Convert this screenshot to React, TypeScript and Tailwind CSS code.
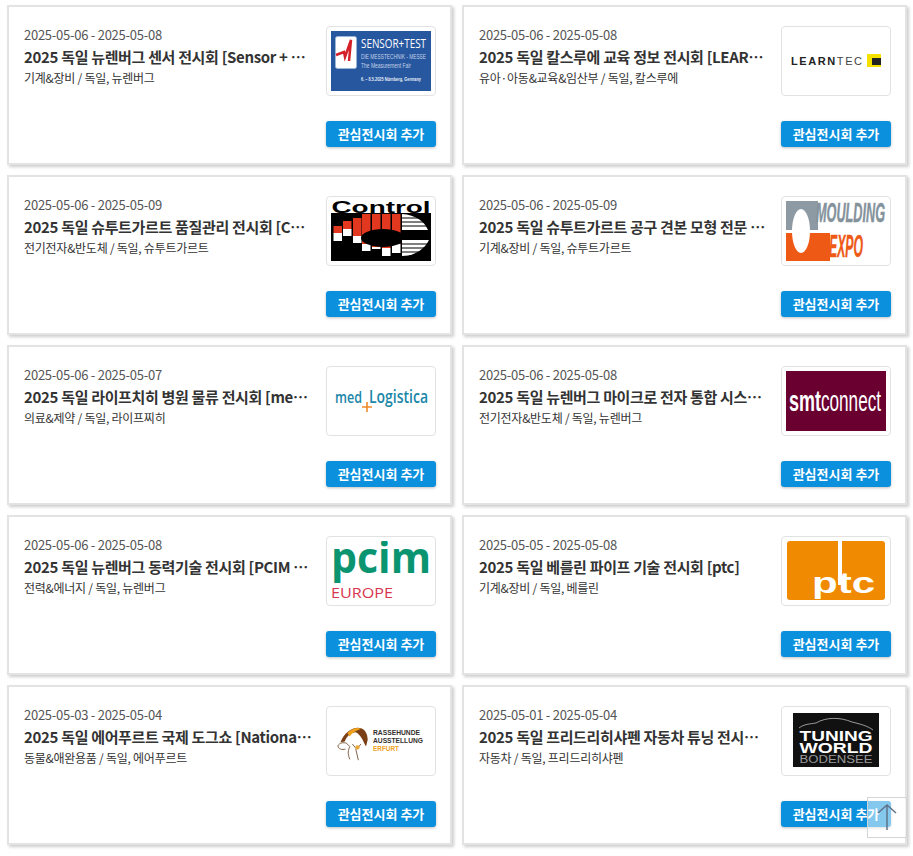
import React from 'react'

const FONT = "'Noto Sans CJK KR', 'Noto Sans', sans-serif"

const SensorLogo = () => (
    <svg viewBox="0 0 100 60" className="w-full h-full">
        <rect width="100" height="60" fill="#27579f" />
        <rect x="4.5" y="5.5" width="21" height="32" rx="2" fill="#fff" stroke="#9db6d8" />
        <path d="M5 24 L13 21 L14 26 L20 9 L18 30" fill="none" stroke="#d5202a" strokeWidth="2.5" />
        <text x="30" y="17" fontSize="13" fontWeight="500" fill="#fff" textLength="65" lengthAdjust="spacingAndGlyphs" fontFamily="Open Sans">SENSOR+TEST</text>
        <text x="30" y="28" fontSize="7" fill="#c4d3ea" textLength="65" lengthAdjust="spacingAndGlyphs" fontFamily="Liberation Sans">DIE MESSTECHNIK - MESSE</text>
        <text x="30" y="37" fontSize="7" fill="#c4d3ea" textLength="50" lengthAdjust="spacingAndGlyphs" fontFamily="Liberation Sans">The Measurement Fair</text>
        <text x="30" y="50" fontSize="5" fontWeight="700" fill="#e6edf7" textLength="60" lengthAdjust="spacingAndGlyphs" fontFamily="Liberation Sans">6. – 8.5.2025 Nürnberg, Germany</text>
    </svg>
)

const LearntecLogo = () => (
    <svg viewBox="0 0 100 60" className="w-full h-full">
        <rect width="100" height="60" fill="#fff" />
        <text x="5" y="34" fontSize="11" fontWeight="700" fill="#222" textLength="71" fontFamily="Liberation Sans">LEARN<tspan fontWeight="400" fill="#444">TEC</tspan></text>
        <rect x="81" y="23" width="14" height="13" fill="#f4e100" />
        <rect x="86" y="27" width="9" height="7" fill="#222" />
    </svg>
)

const controlCols = [
    { x: 2.5, redY: 25, whiteY: 32, whiteH: 8 },
    { x: 12, redY: 20, whiteY: 28, whiteH: 7 },
    { x: 22, redY: 17, whiteY: 35, whiteH: 7 },
    { x: 31, redY: 13, whiteY: 43, whiteH: 7 },
    { x: 41, redY: 13, whiteY: 46, whiteH: 2 },
    { x: 51, redY: 13, whiteY: 47, whiteH: 8 },
    { x: 61, redY: 13, whiteY: 43, whiteH: 9 },
]

const ControlLogo = () => (
    <svg viewBox="0 0 100 60" className="w-full h-full">
        <rect width="100" height="60" fill="#000" />
        <rect width="100" height="12" fill="#fff" />
        <text x="50" y="12" textAnchor="middle" fontSize="16" fontWeight="700" fill="#000" textLength="99" lengthAdjust="spacingAndGlyphs" fontFamily="Liberation Sans">Control</text>
        {controlCols.map((col) => (
            <g key={col.x}>
                <rect x={col.x} y={col.redY} width="8.5" height={col.whiteY - col.redY} fill="#e2381f" />
                <rect x={col.x} y={col.whiteY} width="8.5" height={col.whiteH} fill="#fff" />
            </g>
        ))}
        <ellipse cx="52" cy="37" rx="22" ry="9" fill="#000" />
        <path d="M71 13 C85 14 93 20 97 29 L71 29Z M71 39 H98 C94 47 85 55 71 55Z" fill="#fff" />
        <path d="M71 17 H97 M71 21 H97 M71 25 H97 M71 43 H97 M71 47 H97 M71 51 H97" stroke="#000" strokeWidth="1.2" />
    </svg>
)

const MouldingLogo = () => (
    <svg viewBox="0 0 100 60" className="w-full h-full">
        <rect width="100" height="60" fill="#fff" />
        <rect width="32" height="29" fill="#8d9aa3" />
        <rect y="32" width="44" height="28" fill="#ee5a15" />
        <ellipse cx="15" cy="30" rx="9" ry="22" fill="#fff" />
        <text x="30" y="21" fontSize="28" fontWeight="700" fontStyle="italic" fill="#84929b" stroke="#84929b" strokeWidth="0.5" textLength="69" lengthAdjust="spacingAndGlyphs" fontFamily="Liberation Sans">MOULDING</text>
        <text x="43" y="56" fontSize="32" fontWeight="700" fontStyle="italic" fill="#ee5a15" stroke="#ee5a15" strokeWidth="0.4" textLength="34" lengthAdjust="spacingAndGlyphs" fontFamily="Liberation Sans">EXPO</text>
    </svg>
)

const MedLogo = () => (
    <svg viewBox="0 0 100 60" className="w-full h-full">
        <rect width="100" height="60" fill="#fff" />
        <text x="4" y="32" fontSize="17" fontWeight="600" fill="#1a86a8" textLength="27" lengthAdjust="spacingAndGlyphs" fontFamily="Open Sans">med</text>
        <text x="38" y="32" fontSize="18" fontWeight="600" fill="#1a86a8" textLength="59" lengthAdjust="spacingAndGlyphs" fontFamily="Open Sans">Logistica</text>
        <path d="M36 31 V41 M31 36 H41" stroke="#ef8a2a" strokeWidth="1.6" />
    </svg>
)

const SmtLogo = () => (
    <svg viewBox="0 0 100 60" className="w-full h-full">
        <rect width="100" height="60" fill="#6a0030" />
        <text x="3" y="40" fontSize="30" fill="#fff" textLength="32" lengthAdjust="spacingAndGlyphs" fontWeight="700" fontFamily="Liberation Sans">smt</text>
        <text x="35" y="40" fontSize="30" fill="#fff" textLength="60" lengthAdjust="spacingAndGlyphs" fontFamily="Liberation Sans">connect</text>
    </svg>
)

const PcimLogo = () => (
    <svg viewBox="0 0 100 60" className="w-full h-full">
        <rect width="100" height="60" fill="#fff" />
        <text x="0" y="32" fontSize="43" fontWeight="700" fill="#0a9470" textLength="100" lengthAdjust="spacingAndGlyphs" fontFamily="Open Sans">pcim</text>
        <text x="0" y="57" fontSize="15" fill="#d8344f" textLength="62" lengthAdjust="spacingAndGlyphs" fontFamily="Open Sans">EUROPE</text>
    </svg>
)

const PtcLogo = () => (
    <svg viewBox="0 0 100 60" className="w-full h-full">
        <rect width="100" height="60" fill="#fff" />
        <rect x="1" y="0" width="98" height="59" rx="3" fill="#f08a00" />
        <rect x="52" y="0" width="4" height="44" fill="#fff" />
        <text x="26" y="52" fontSize="30" fontWeight="700" fill="#fff" textLength="63" lengthAdjust="spacingAndGlyphs" fontFamily="Liberation Sans">ptc</text>
    </svg>
)

const RasseLogo = () => (
    <svg viewBox="0 0 100 60" className="w-full h-full">
        <rect width="100" height="60" fill="#fff" />
        <g transform="translate(1 5) scale(0.85)">
            <path d="M10 31 C14 20 24 13 32 14 C38 14 42 20 42 28 L40 36 C36 28 34 22 28 19 C22 19 17 24 15 30Z" fill="#7a3f16" />
            <path d="M18 20 C24 14 30 13 34 15 C30 17 24 19 21 24Z" fill="#eea21d" />
            <path d="M7 35 C9 31 14 31 17 32 L21 36 C19 40 18 44 21 51 M7 35 C7 39 12 40 16 39 M24 33 L29 39 L34 33 M28 39 L31 52" fill="none" stroke="#6d4a2a" strokeWidth="1" />
            <circle cx="30" cy="37" r="2.5" fill="#e8a838" />
        </g>
        <text x="42" y="24" fontSize="7" fontWeight="700" fill="#33302c" textLength="47" lengthAdjust="spacingAndGlyphs" fontFamily="Liberation Sans">RASSEHUNDE</text>
        <text x="42" y="32" fontSize="7" fontWeight="700" fill="#33302c" textLength="50" lengthAdjust="spacingAndGlyphs" fontFamily="Liberation Sans">AUSSTELLUNG</text>
        <text x="42" y="40" fontSize="7" fontWeight="700" fill="#eea21d" textLength="26" lengthAdjust="spacingAndGlyphs" fontFamily="Liberation Sans">ERFURT</text>
    </svg>
)

const TuningLogo = () => (
    <svg viewBox="0 0 100 60" className="w-full h-full">
        <rect width="100" height="60" fill="#fff" />
        <rect x="7" y="2" width="86" height="54" fill="#111" />
        <path d="M13 17 C18 13 24 13 30 12 C40 6 54 6 66 11 C74 13 82 15 87 19" fill="none" stroke="#bbb" strokeWidth="0.8" />
        <text x="50" y="30" textAnchor="middle" fontSize="14" fontWeight="700" fill="#fff" textLength="73" lengthAdjust="spacingAndGlyphs" fontFamily="Liberation Sans">TUNING</text>
        <text x="50" y="42" textAnchor="middle" fontSize="14" fontWeight="700" fill="#fff" textLength="73" lengthAdjust="spacingAndGlyphs" fontFamily="Liberation Sans">WORLD</text>
        <text x="50" y="52" textAnchor="middle" fontSize="10" fill="#999" textLength="73" lengthAdjust="spacingAndGlyphs" fontFamily="Liberation Sans">BODENSEE</text>
    </svg>
)

const fairs = [
    { date: '2025-05-06 - 2025-05-08', title: '2025 독일 뉴렌버그 센서 전시회 [Sensor + Test]', cat: '기계&장비 / 독일, 뉴렌버그', logo: <SensorLogo /> },
    { date: '2025-05-06 - 2025-05-08', title: '2025 독일 칼스루에 교육 정보 전시회 [LEARNTEC]', cat: '유아·아동&교육&임산부 / 독일, 칼스루에', logo: <LearntecLogo /> },
    { date: '2025-05-06 - 2025-05-09', title: '2025 독일 슈투트가르트 품질관리 전시회 [Control]', cat: '전기전자&반도체 / 독일, 슈투트가르트', logo: <ControlLogo /> },
    { date: '2025-05-06 - 2025-05-09', title: '2025 독일 슈투트가르트 공구 견본 모형 전문 전시회', cat: '기계&장비 / 독일, 슈투트가르트', logo: <MouldingLogo /> },
    { date: '2025-05-06 - 2025-05-07', title: '2025 독일 라이프치히 병원 물류 전시회 [med+Logistica]', cat: '의료&제약 / 독일, 라이프찌히', logo: <MedLogo /> },
    { date: '2025-05-06 - 2025-05-08', title: '2025 독일 뉴렌버그 마이크로 전자 통합 시스템 전시회', cat: '전기전자&반도체 / 독일, 뉴렌버그', logo: <SmtLogo /> },
    { date: '2025-05-06 - 2025-05-08', title: '2025 독일 뉴렌버그 동력기술 전시회 [PCIM Europe]', cat: '전력&에너지 / 독일, 뉴렌버그', logo: <PcimLogo /> },
    { date: '2025-05-05 - 2025-05-08', title: '2025 독일 베를린 파이프 기술 전시회 [ptc]', cat: '기계&장비 / 독일, 베를린', logo: <PtcLogo /> },
    { date: '2025-05-03 - 2025-05-04', title: '2025 독일 에어푸르트 국제 도그쇼 [National Dog Show]', cat: '동물&애완용품 / 독일, 에어푸르트', logo: <RasseLogo /> },
    { date: '2025-05-01 - 2025-05-04', title: '2025 독일 프리드리히샤펜 자동차 튜닝 전시회 [Tuning World]', cat: '자동차 / 독일, 프리드리히샤펜', logo: <TuningLogo /> },
]

const App = () => {
    return (
        <div className="bg-white h-[856px] pl-[7px] pt-[5px] overflow-hidden" style={{ fontFamily: FONT }}>
            <div className="grid grid-cols-[445px_445px] gap-x-[10px] gap-y-[10px]">
                {fairs.map((fair) => (
                    <div
                        key={fair.title}
                        className="h-[160px] bg-white border-2 border-[#e3e3e3] shadow-[2px_2px_3px_rgba(0,0,0,0.2)] pl-[15px] pr-[14px] pt-[19px] flex flex-col"
                    >
                        <div className="flex justify-between">
                            <div className="w-[289px]">
                                <p className="text-[13px] leading-[18px] tracking-[-0.26px] text-[#555555]">{fair.date}</p>
                                <p className="mt-[2px] text-[15px] leading-[22px] tracking-[-0.33px] font-semibold text-[#333333] truncate">{fair.title}</p>
                                <p className="mt-[1px] text-[12px] leading-[18px] tracking-[-0.25px] text-[#333333]">{fair.cat}</p>
                            </div>
                            <div className="w-[110px] h-[70px] border border-[#e2e2e2] rounded-[4px] p-[4px] bg-white">
                                {fair.logo}
                            </div>
                        </div>
                        <div className="flex justify-end mt-[25px]">
                            <button className="w-[110px] h-[26px] rounded-[3px] bg-[#0a90dd] text-white text-[13px] font-bold shadow-[0_1px_3px_rgba(0,0,0,0.25)]">
                                관심전시회 추가
                            </button>
                        </div>
                    </div>
                ))}
            </div>

            {/* scroll to top */}
            <button className="fixed left-[867px] top-[797px] w-[40px] h-[41px] border border-[#d5d5d5] bg-white/50 flex items-center justify-center">
                <svg viewBox="0 0 38 39" className="w-[38px] h-[39px]">
                    <path d="M19 32 V7 M10 15 L19 7 L28 15" fill="none" stroke="#5f7388" strokeWidth="1.5" />
                </svg>
            </button>
        </div>
    )
}

export default App
